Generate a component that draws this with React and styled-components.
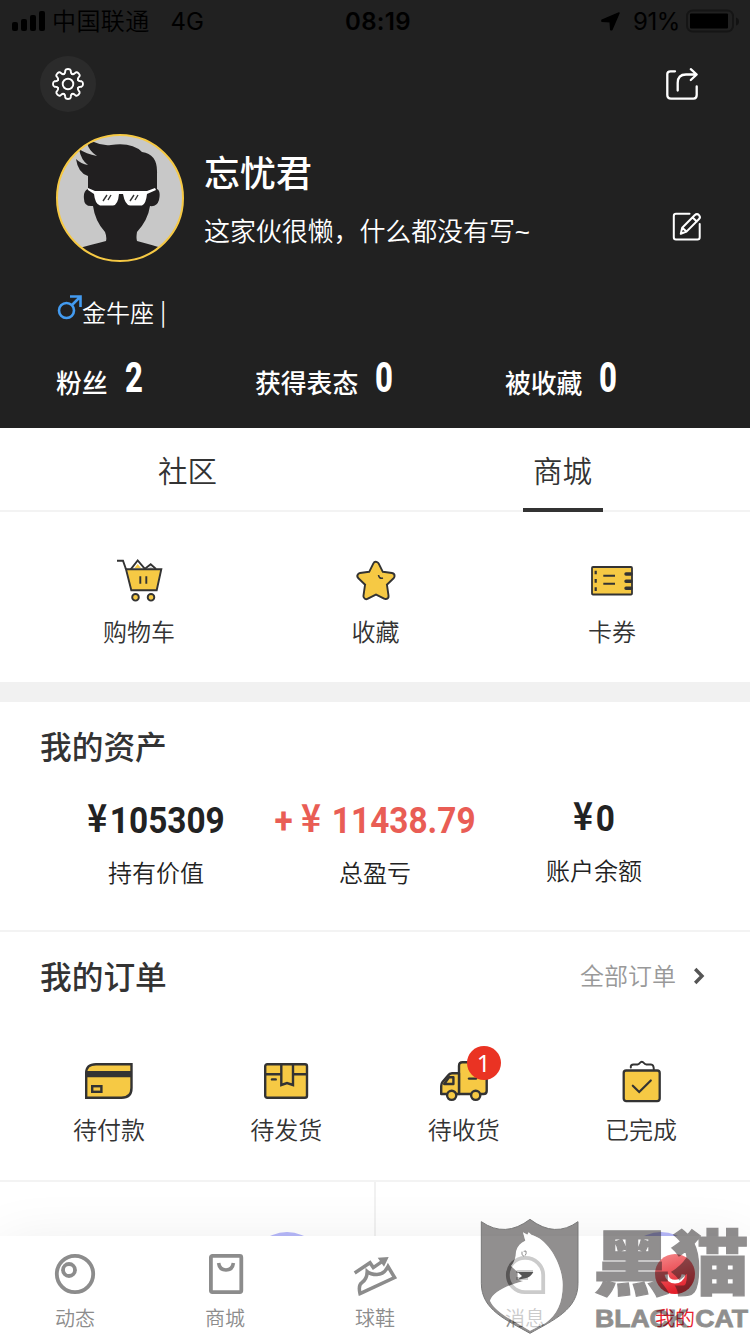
import React from "react";
import styled, { createGlobalStyle } from "styled-components";

const GlobalStyle = createGlobalStyle`
  * {
    box-sizing: border-box;
  }
  body {
    margin: 0;
    background: #fff;
    font-family: "Liberation Sans", "Noto Sans CJK SC", sans-serif;
    color: #333;
  }
  svg {
    display: block;
    overflow: visible;
    flex: none;
  }
`;

const Page = styled.div`
  position: relative;
  width: 750px;
  height: 1334px;
  display: flex;
  flex-direction: column;
  overflow: hidden;
  background: #fff;
`;

const Header = styled.header`
  height: 428px;
  flex: none;
  background: #212121;
  color: #fff;
`;

const StatusBar = styled.div`
  height: 40px;
  display: grid;
  grid-template-columns: 1fr auto 1fr;
  align-items: center;
  padding: 0 11px 0 12px;
  color: #000;
  font-family: Inter, "Noto Sans CJK SC", sans-serif;
  font-size: 24px;
  line-height: 40px;
`;

const StatusGroup = styled.div`
  display: flex;
  align-items: center;
  justify-content: ${(props) => (props.$end ? "flex-end" : "flex-start")};
`;

const Carrier = styled.span`
  margin: 0 21px 0 7px;
  padding-top: 2px;
  font-weight: 350;
  letter-spacing: 0.4px;
`;

const Network = styled.span`
  padding-top: 1px;
`;

const Clock = styled.span`
  font-weight: 600;
  letter-spacing: 0.3px;
  padding: 1px 0 0 5px;
`;

const Percent = styled.span`
  margin: 0 6px 0 13px;
  padding-top: 1px;
  letter-spacing: -0.4px;
`;

const Toolbar = styled.div`
  display: flex;
  justify-content: space-between;
  align-items: center;
  height: 56px;
  margin: 16px 52px 0 40px;
`;

const RoundButton = styled.button`
  width: 56px;
  height: 56px;
  padding: 0;
  border: 0;
  border-radius: 50%;
  background: #2b2b2b;
  display: flex;
  align-items: center;
  justify-content: center;
`;

const Profile = styled.section`
  display: flex;
  height: 128px;
  margin: 22px 48px 0 56px;
`;

const Names = styled.div`
  flex: 1;
  margin-left: 20px;
  padding-top: 17px;
`;

const UserName = styled.h1`
  margin: 0;
  font-size: 36px;
  font-weight: 500;
  line-height: 47px;
`;

const BioRow = styled.div`
  display: flex;
  justify-content: space-between;
  align-items: flex-start;
  height: 36px;
  margin-top: 14px;
`;

const Bio = styled.span`
  font-size: 26px;
  font-weight: 350;
  line-height: 36px;
  padding-top: 2px;
  letter-spacing: -0.1px;
`;

const SignRow = styled.div`
  display: flex;
  height: 32px;
  margin: 33px 0 0 57px;
  font-size: 24px;
  font-weight: 350;
  line-height: 37px;
`;

const Separator = styled.span`
  margin: 5px 0 0 6px;
  font-family: "Noto Sans CJK SC", sans-serif;
  line-height: 22px;
`;

const Stats = styled.div`
  display: flex;
  align-items: flex-start;
  height: 50px;
  margin: 32px 0 0 56px;
`;

const Stat = styled.div`
  display: flex;
  width: ${(props) => props.$width}px;
  font-size: 25.8px;
  font-weight: 500;
  line-height: 50px;
`;

const StatNumber = styled.b`
  margin: -6px 0 0 17px;
  font-family: Roboto, sans-serif;
  font-size: 42px;
  font-weight: 800;
  line-height: 50px;
  transform: scaleX(0.74);
  transform-origin: left;
`;

const Tabs = styled.nav`
  flex: none;
  display: flex;
  height: 84px;
  border-bottom: 2px solid #f3f3f3;
`;

const Tab = styled.div`
  flex: 1;
  display: flex;
  justify-content: center;
  height: 84px;

  span {
    min-width: 80px;
    height: 84px;
    text-align: center;
    font-size: 29.5px;
    font-weight: 350;
    line-height: 87px;
    border-bottom: 4px solid ${(props) => (props.$active ? "#333" : "transparent")};
  }
`;

const Shortcuts = styled.section`
  flex: none;
  display: flex;
  justify-content: space-between;
  height: 190px;
  padding: 46px 78px 0 79px;
  border-bottom: 20px solid #f1f1f1;
`;

const Entry = styled.div`
  position: relative;
  width: 120px;
  display: flex;
  flex-direction: column;
  align-items: center;
  font-size: 24px;
  font-weight: 350;
  line-height: 34px;
`;

const IconSlot = styled.div`
  height: ${(props) => props.$height || 46}px;
  display: flex;
  align-items: center;
  justify-content: center;
  margin-bottom: ${(props) => props.$gap || 0}px;
`;

const Assets = styled.section`
  flex: none;
  height: 230px;
  padding: 24px 40px 0;
  border-bottom: 2px solid #f3f3f3;
`;

const Title = styled.h2`
  margin: 0;
  font-size: 31.7px;
  font-weight: 500;
  line-height: 44px;
  color: #333;
`;

const AssetRow = styled.div`
  display: flex;
  margin-top: 26px;
`;

const Asset = styled.div`
  width: ${(props) => props.$width}px;
  margin-top: ${(props) => props.$lift || 0}px;
  text-align: center;
  font-size: 24px;
  font-weight: 350;
  line-height: 34px;
  color: #222;
`;

const Amount = styled.div`
  display: flex;
  justify-content: center;
  height: 48px;
  margin-bottom: 13px;
  font-family: Roboto, "Noto Sans CJK SC", sans-serif;
  font-size: 37.5px;
  font-weight: 700;
  line-height: 48px;
  white-space: pre;
  transform: scaleX(0.89);
  color: ${(props) => (props.$gain ? "#e95d55" : "#222")};
`;

const Yen = styled.span`
  font-family: "Noto Sans CJK SC", sans-serif;
  font-size: 38px;
  font-weight: 700;
  margin: -4px 3px 0 0;
`;

const Orders = styled.section`
  flex: none;
  height: 250px;
  padding: 24px 40px 0;
  border-bottom: 2px solid #f3f3f3;
`;

const OrdersHead = styled.div`
  display: flex;
  justify-content: space-between;
  align-items: flex-start;
`;

const AllOrders = styled.a`
  display: flex;
  align-items: center;
  gap: 18px;
  height: 40px;
  margin-right: 6px;
  font-size: 24px;
  font-weight: 350;
  line-height: 41px;
  color: #999;
`;

const OrderRow = styled.div`
  display: flex;
  justify-content: space-between;
  margin: 57px -1px 0 9px;
  width: 652px;
`;

const Badge = styled.span`
  position: absolute;
  top: -11px;
  left: 63px;
  width: 34px;
  height: 34px;
  border-radius: 50%;
  background: #ea3323;
  color: #fff;
  text-align: center;
  font-family: "Noto Sans", sans-serif;
  font-size: 24px;
  font-weight: 400;
  line-height: 33px;
`;

const Cells = styled.div`
  flex: none;
  display: grid;
  grid-template-columns: 376px 374px;
  height: 54px;
  overflow: hidden;
`;

const Cell = styled.div`
  display: flex;
  justify-content: flex-end;
  padding: 50px ${(props) => props.$right}px 0 0;
  border-right: ${(props) => (props.$divided ? "2px solid #f1f1f1" : "0")};
`;

const Bubble = styled.div`
  width: 76px;
  height: 76px;
  border-radius: 50%;
  background: #b6b8fa;
`;

const TabBar = styled.footer`
  position: relative;
  flex: none;
  display: flex;
  height: 98px;
  background: #fff;
  box-shadow: 0 10px 60px rgba(0, 0, 0, 0.09);
`;

const BarItem = styled.div`
  width: 150px;
  display: flex;
  flex-direction: column;
  align-items: center;
  gap: 10px;
  padding-top: 18px;
  font-size: 20px;
  font-weight: 350;
  line-height: 30px;
  color: ${(props) => (props.$active ? "#e8202c" : "#8c8c8c")};
`;

// Sits over the bottom right corner of the whole page
const Watermark = styled.svg`
  position: absolute;
  left: 480px;
  top: 1218px;
`;

const ink = "#333";
const gold = "#f6c944";

const Signal = () => (
  <svg width="33" height="20" viewBox="0 0 33 20">
    <rect x="0" y="11" width="6" height="9" rx="2" />
    <rect x="9" y="8" width="6" height="12" rx="2" />
    <rect x="18" y="4" width="6" height="16" rx="2" />
    <rect x="27" y="0" width="6" height="20" rx="2" />
  </svg>
);

const LocationArrow = () => (
  <svg width="19" height="19" viewBox="0 0 19 19">
    <path d="M18 1 10.8 17.6H9.8L9.2 9.8 1 9.2V8.2Z" stroke="#000" strokeWidth="1.6" strokeLinejoin="round" />
  </svg>
);

const Battery = () => (
  <svg width="53" height="24" viewBox="0 0 53 24">
    <rect x="1" y="1.5" width="46" height="21" rx="5.5" fill="none" stroke="#151515" strokeWidth="2" />
    <rect x="4" y="4.5" width="38" height="15" rx="1" />
    <path d="M50 8.5q3 1 3 4t-3 4z" fill="#121212" />
  </svg>
);

const Gear = () => {
  const teeth = [];
  for (let i = 0; i < 8; i += 1) {
    teeth.push(
      <path
        key={i}
        d="M-4.1-9.9Q-2.9-10.6-2.8-12.4L-2.7-13.6Q-2.2-15 0-15T2.7-13.6L2.8-12.4Q2.9-10.6 4.1-9.9"
        transform={`rotate(${i * 45})`}
      />
    );
  }
  return (
    <svg width="32" height="32" viewBox="-16 -16 32 32">
      <g fill="none" stroke="#fff" strokeWidth="1.9" strokeLinecap="round">
        {teeth}
        <circle r="5.3" />
      </g>
    </svg>
  );
};

const Share = () => (
  <svg width="32" height="32" viewBox="0 0 32 32">
    <g fill="none" stroke="#fff" strokeWidth="2.3" strokeLinecap="round" strokeLinejoin="round">
      <path d="M9 3.3H4.5Q1.3 3.3 1.3 6V27Q1.3 30.6 5 30.6H27.5Q30.7 30.6 30.7 27V18.5" />
      <path d="M11.7 22.5V15Q11.7 6.5 20 6.5H30.5M24.8 1.2 30.7 6.5 24.8 12" />
    </g>
  </svg>
);

const Edit = () => (
  <svg width="30" height="30" viewBox="0 0 30 30">
    <g fill="none" stroke="#fff" strokeWidth="2" strokeLinecap="round" strokeLinejoin="round">
      <path d="M17.5 1.8H4Q1.8 1.8 1.8 4V25.3Q1.8 27.5 4 27.5H25.5Q27.7 27.5 27.7 25.3V12" />
      <path d="M8.8 21.8 10.2 15.8 22.6 3.2Q25 1 27 3.1T26.8 7.3L14.5 19.6ZM20.6 5.5 24.8 9.5M10.2 15.8 14.5 19.6" />
    </g>
  </svg>
);

const Male = () => (
  <svg width="25" height="26" viewBox="0 0 25 26">
    <g fill="none" stroke="#439bf0" strokeWidth="2.6">
      <circle cx="9.5" cy="15.5" r="7.5" />
      <path d="M15 10 23.5 1.5M13 1.5H23.5V12" />
    </g>
  </svg>
);

const Avatar = () => (
  <svg width="128" height="128" viewBox="0 0 128 128">
    <defs>
      <clipPath id="face">
        <circle cx="64" cy="64" r="63" />
      </clipPath>
    </defs>
    <g clipPath="url(#face)">
      <rect width="128" height="128" fill="#c8c8c8" />
      <path
        d="M32 57V42Q22 39 20 25Q25 30 32 31Q25 26 23 15Q30 20 41 22Q33 17 31 9L38 8Q46 12 55 11Q76 8 86 18Q102 20 101 40V55Q105 57 103 66Q101 73 94 72Q92 86 81 98Q80 104 81 107Q93 110 112 116V130H16V116Q38 110 50 107Q51 103 49 98Q39 87 37 72Q28 73 28 65Q27 57 32 55Z"
        fill="#211f20"
      />
      <path
        d="M32 54 39 57H91L99 54 100 56 91 60Q90 70 86 71.5H74Q69 71 67 60H63Q62 71 57 71.5H44Q39 70 38 60L32 56Z"
        fill="#fff"
      />
      <path d="M47 67 51 61M52 66 55 61M74 67 78 61M79 66 82 61" stroke="#333" strokeWidth="1.4" />
    </g>
    <circle cx="64" cy="64" r="63" fill="none" stroke="#f6c944" strokeWidth="2" />
  </svg>
);

const Cart = () => (
  <svg width="44" height="44" viewBox="0 0 44 44" fill="none" stroke={ink} strokeWidth="1.9">
    <path d="M13.7 10.3 20.7 1.5 28.3 10.3M28.3 9.5 33.7 5.3 39 10" fill="#fff" />
    <path d="M17.5 9 20.7 5 24 9Z" fill={gold} stroke="none" />
    <path d="M30.5 10 33.7 7.5 37 10Z" fill="#ccc" stroke="none" />
    <path d="M9 10.3H44.3L39.7 31.3H14.3Z" fill={gold} />
    <path d="M0 1.7H6L9 10.3M23.3 17.3V24.7M29.3 17.3V24.7" />
    <circle cx="18.5" cy="38.3" r="3.3" fill={gold} />
    <circle cx="34" cy="38.3" r="3.3" fill={gold} />
  </svg>
);

const starPath = "M20 4.5 24.7 14 35.5 15.5 27.7 23 29.5 35.5 20 30.7 10.5 35.5 12.3 23 4.5 15.5 15.3 14Z";

const Star = () => (
  <svg width="40" height="40" viewBox="0 0.5 40 40" strokeLinejoin="round">
    <path d={starPath} stroke={ink} strokeWidth="8" />
    <path d={starPath} fill={gold} stroke={gold} strokeWidth="4.2" />
    <path d="M22.5 14.5Q23 18.5 27 17.5" fill="none" stroke={ink} strokeWidth="1.6" />
  </svg>
);

const Ticket = () => (
  <svg width="42" height="30" viewBox="0 0 42 30" stroke={ink} fill="none">
    <rect x="1" y="1" width="40" height="27.5" rx="1" fill={gold} strokeWidth="1.8" />
    <path d="M4.7 4.7V8.3M4.7 13V16.7M4.7 21.3V25" strokeWidth="2.2" />
    <path d="M12.3 9.7H24M12.3 17.8H24" strokeWidth="2" />
    <path d="M35 8H40M35 15.2H40M35 22.3H40" strokeWidth="3.4" strokeLinecap="round" />
  </svg>
);

const BankCard = () => (
  <svg width="48" height="36" viewBox="0 0 48 36" stroke={ink} fill="none" strokeWidth="2.4">
    <path d="M1.2 34.8V10Q1.2 1.2 11 1.2H46.5V25Q46.5 34.8 36.5 34.8Z" fill={gold} />
    <path d="M1 11.2H47" strokeWidth="6.2" />
    <rect x="7.2" y="23.2" width="9.2" height="5.6" />
  </svg>
);

const Parcel = () => (
  <svg width="44" height="36" viewBox="0 0 44 36" stroke={ink} fill="none" strokeWidth="2.4">
    <rect x="1.2" y="1.2" width="41.8" height="33.6" rx="2" fill={gold} />
    <path d="M1 11.3H17.3M29 11.3H43M17.3 1V22L23 20 29 22V1" />
    <path d="M8 16.4H11.7" strokeLinecap="round" />
  </svg>
);

const Truck = () => (
  <svg width="48" height="40" viewBox="0 0 48 40" stroke={ink} fill="none" strokeWidth="2.4" strokeLinejoin="round">
    <path d="M19 33V5Q19 1.2 22.5 1.2H46.7V30Q46.7 33 43.5 33Z" fill={gold} />
    <path d="M19 12.3H12Q9.5 12.3 8 14.5L2.5 21Q1.2 22.5 1.2 25V33H19Z" fill={gold} />
    <path d="M9 16.3H13.4V23H4.2Z" />
    <path d="M29 17.6H36" strokeLinecap="round" />
    <circle cx="11.7" cy="34.3" r="4.6" fill={gold} />
    <circle cx="35.7" cy="34.3" r="4.6" fill={gold} />
  </svg>
);

const Done = () => (
  <svg width="38" height="42" viewBox="-0.5 0 38 42" stroke={ink} fill="none" strokeWidth="2" strokeLinecap="round">
    <rect x="1.2" y="10.5" width="36" height="30.6" rx="2.5" fill={gold} strokeWidth="2.3" />
    <path d="M8.3 7.5Q8 4.5 11 4.5H15Q16.5 4.2 17.3 3Q19.3.3 21.4 3Q22.2 4.2 24 4.5H28.5Q31.3 4.5 31.3 9.5" />
    <path d="M10.3 25.7 16.7 32 28.3 20.5" strokeWidth="2.2" />
  </svg>
);

const Chevron = () => (
  <svg width="10" height="18" viewBox="0 0 10 18">
    <path d="M1.2 2 8 9 1.2 16" fill="none" stroke="#555" strokeWidth="3.4" />
  </svg>
);

const BarIcon = ({ shape }) => {
  switch (shape) {
    case "feed":
      return (
        <>
          <circle cx="20" cy="20" r="18.2" />
          <circle cx="14" cy="16" r="6" />
        </>
      );
    case "mall":
      return (
        <>
          <rect x="5.9" y="1.9" width="30.4" height="36.2" rx="1.5" />
          <path d="M13.6 9Q14.5 16 21 16T28.4 9" strokeWidth="3.6" />
        </>
      );
    case "shoe":
      return (
        <>
          <path
            d="M-.3 19 15 8.7 18.3 13.6 28 6.9M5 39.6 39.6 23.5 33 12.5Q29 20.5 22 20.5 15.5 20.5 12.2 17.6 12 25 7 28.5 3 31 5 39.6Z"
            strokeWidth="3.5"
          />
          <path d="M22.7 3.7 33.7 3 29 12.7Z" fill="#8c8c8c" stroke="none" />
        </>
      );
    case "message":
      return (
        <>
          <path d="M20 3.8A17.2 17.2 0 0 0 20 38.2H38.2V21A18 17.2 0 0 0 20 3.8Z" />
          <path d="M11.5 17.5H28M11.5 24.5H23" strokeWidth="3" />
        </>
      );
    case "mine":
      return (
        <>
          <circle cx="20" cy="20" r="20" fill="url(#rose)" stroke="none" />
          <path d="M11.5 20.5C13 30 27 30 28.5 20.5" stroke="#fff" />
        </>
      );
    default:
      return null;
  }
};

const barItems = [
  { shape: "feed", label: "动态" },
  { shape: "mall", label: "商城" },
  { shape: "shoe", label: "球鞋" },
  { shape: "message", label: "消息" },
  { shape: "mine", label: "我的", active: true },
];

const shortcuts = [
  { icon: <Cart />, label: "购物车" },
  { icon: <Star />, label: "收藏" },
  { icon: <Ticket />, label: "卡券" },
];

const orders = [
  { icon: <BankCard />, label: "待付款" },
  { icon: <Parcel />, label: "待发货" },
  { icon: <Truck />, label: "待收货", count: 1 },
  { icon: <Done />, label: "已完成" },
];

const shieldPath =
  "M94 155Q165 205 240 148Q315 205 384 155V340C384 420 310 450 240 490C170 450 94 420 94 340Z";
const catPath =
  "M226 212 219 187 232 194 236 187 244 194C300 210 338 290 338 345C338 400 320 435 287 459L240 482C185 450 135 425 120 392C130 365 170 347 220 333L203 329 203 306 183 288Q198 270 198 245 203 222 226 212Z";

const BlackCat = () => (
  <Watermark width="270" height="116" viewBox="0 0 270 116">
    <g transform="translate(-30 -48) scale(.33333)">
      <path d={`${shieldPath}${catPath}`} fillRule="evenodd" fill="#231f20" fillOpacity="0.5" />
      <path d={shieldPath} fill="none" stroke="#777" strokeWidth="3" />
      <path d={catPath} fill="#fff" fillOpacity="0.55" />
      <path d="M216 245Q213 256 222 259M221 244 228 243Q230 252 225 257" fill="none" stroke="#777" strokeWidth="2.5" />
      <path d="M203 306H250Q242 322 226 325L203 329 216 318Z" fill="#555" />
    </g>
    <g fill="#231f20" stroke="#231f20" opacity="0.5">
      <text
        x="113"
        y="70.5"
        fontFamily="Noto Sans CJK SC, sans-serif"
        fontSize="71"
        fontWeight="900"
        strokeWidth="1.2"
        textLength="156"
        lengthAdjust="spacingAndGlyphs"
      >
        黑猫
      </text>
      <text
        x="115"
        y="108.5"
        fontFamily="Liberation Sans, sans-serif"
        fontSize="23.5"
        fontWeight="700"
        strokeWidth="0.8"
        textLength="153"
        lengthAdjust="spacingAndGlyphs"
      >
        BLACK CAT
      </text>
    </g>
  </Watermark>
);

const App = () => (
  <>
    <GlobalStyle />
    <Page>
      <Header>
        <StatusBar>
          <StatusGroup>
            <Signal />
            <Carrier>中国联通</Carrier>
            <Network>4G</Network>
          </StatusGroup>
          <Clock>08:19</Clock>
          <StatusGroup $end>
            <LocationArrow />
            <Percent>91%</Percent>
            <Battery />
          </StatusGroup>
        </StatusBar>
        <Toolbar>
          <RoundButton>
            <Gear />
          </RoundButton>
          <Share />
        </Toolbar>
        <Profile>
          <Avatar />
          <Names>
            <UserName>忘忧君</UserName>
            <BioRow>
              <Bio>这家伙很懒，什么都没有写~</Bio>
              <Edit />
            </BioRow>
          </Names>
        </Profile>
        <SignRow>
          <Male />
          <span>金牛座</span>
          <Separator>|</Separator>
        </SignRow>
        <Stats>
          <Stat $width={199}>
            粉丝<StatNumber>2</StatNumber>
          </Stat>
          <Stat $width={250}>
            获得表态<StatNumber>0</StatNumber>
          </Stat>
          <Stat $width={160}>
            被收藏<StatNumber>0</StatNumber>
          </Stat>
        </Stats>
      </Header>
      <Tabs>
        <Tab>
          <span>社区</span>
        </Tab>
        <Tab $active>
          <span>商城</span>
        </Tab>
      </Tabs>
      <Shortcuts>
        {shortcuts.map(({ icon, label }) => (
          <Entry key={label}>
            <IconSlot $gap={12}>{icon}</IconSlot>
            {label}
          </Entry>
        ))}
      </Shortcuts>
      <Assets>
        <Title>我的资产</Title>
        <AssetRow>
          <Asset $width={232}>
            <Amount>
              <Yen>¥</Yen>105309
            </Amount>
            持有价值
          </Asset>
          <Asset $width={206}>
            <Amount $gain>
              + <Yen>¥</Yen> 11438.79
            </Amount>
            总盈亏
          </Asset>
          <Asset $width={232} $lift={-2}>
            <Amount>
              <Yen>¥</Yen>0
            </Amount>
            账户余额
          </Asset>
        </AssetRow>
      </Assets>
      <Orders>
        <OrdersHead>
          <Title>我的订单</Title>
          <AllOrders>
            全部订单
            <Chevron />
          </AllOrders>
        </OrdersHead>
        <OrderRow>
          {orders.map(({ icon, label, count }) => (
            <Entry key={label}>
              <IconSlot $gap={9} $height={48}>
                {icon}
              </IconSlot>
              {label}
              {count && <Badge>{count}</Badge>}
            </Entry>
          ))}
        </OrderRow>
      </Orders>
      <Cells>
        <Cell $divided $right={49}>
          <Bubble />
        </Cell>
        <Cell $right={51}>
          <Bubble />
        </Cell>
      </Cells>
      <TabBar>
        {barItems.map(({ shape, label, active }) => (
          <BarItem key={shape} $active={active}>
            <svg width="40" height="40" viewBox="0 0 40 40" fill="none" stroke="#8c8c8c" strokeWidth="3.8">
              <defs>
                <linearGradient id="rose" x1="0" y1="0" x2="0.3" y2="1">
                  <stop offset="0" stopColor="#f58a8c" />
                  <stop offset="1" stopColor="#e3202b" />
                </linearGradient>
              </defs>
              <BarIcon shape={shape} />
            </svg>
            {label}
          </BarItem>
        ))}
      </TabBar>
      <BlackCat />
    </Page>
  </>
);

export default App;
